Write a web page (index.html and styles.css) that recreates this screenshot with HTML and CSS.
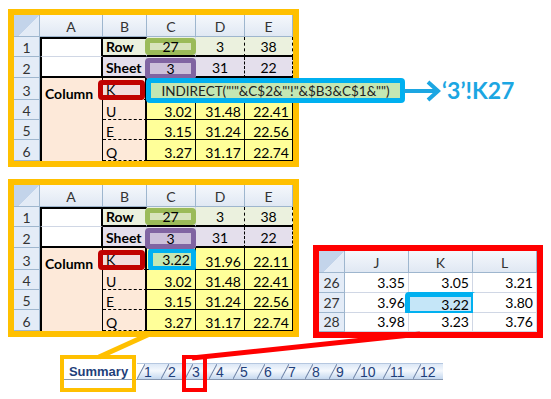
FILE: index.html
```html
<!DOCTYPE html>
<html>
<head>
  <title>INDIRECT lookup across sheets</title>
  <link rel="stylesheet" href="styles.css">
</head>
<body>
<div class="page">

  <!-- summary sheet, formula version -->
  <div class="frame frame-orange">
    <div class="sheet">
      <div class="corner"></div><div class="ch">A</div><div class="ch">B</div><div class="ch">C</div><div class="ch">D</div><div class="ch">E</div>

      <div class="rh">1</div>
      <div class="blank first"></div>
      <div class="lbl green top">Row</div>
      <div class="green sep mid"><span class="mark mark-green">27</span></div>
      <div class="green sep mid dash">3</div>
      <div class="green sep mid dash">38</div>

      <div class="rh">2</div>
      <div class="blank last"></div>
      <div class="lbl purple sep">Sheet</div>
      <div class="purple sep mid"><span class="mark mark-purple">3</span></div>
      <div class="purple sep mid dash">31</div>
      <div class="purple sep mid dash">22</div>

      <div class="rh">3</div>
      <div class="colname">Column</div>
      <div class="key"><span class="mark mark-red">K</span></div>
      <div class="val">
        <div class="callout">
          <div class="formula">INDIRECT("'"&amp;C$2&amp;"'!"&amp;$B3&amp;C$1&amp;"")</div>
          <svg class="arrow" width="38" height="24" viewBox="0 0 38 24">
            <path d="M0 12H33M24 3L34 12L24 21" fill="none" stroke="#1ca6e2" stroke-width="4"/>
          </svg>
          <div class="result">&#8216;3&#8217;!K27</div>
        </div>
      </div>
      <div class="val"></div>
      <div class="val"></div>

      <div class="rh">4</div><div class="key">U</div><div class="val">3.02</div><div class="val">31.48</div><div class="val">22.41</div>
      <div class="rh">5</div><div class="key">E</div><div class="val">3.15</div><div class="val">31.24</div><div class="val">22.56</div>
      <div class="rh">6</div><div class="key">Q</div><div class="val">3.27</div><div class="val">31.17</div><div class="val">22.74</div>
    </div>
  </div>

  <div class="lower">
    <!-- summary sheet, result version -->
    <div class="frame frame-orange">
      <div class="sheet">
        <div class="corner"></div><div class="ch">A</div><div class="ch">B</div><div class="ch">C</div><div class="ch">D</div><div class="ch">E</div>

        <div class="rh">1</div>
        <div class="blank first"></div>
        <div class="lbl green top">Row</div>
        <div class="green sep mid"><span class="mark mark-green">27</span></div>
        <div class="green sep mid dash">3</div>
        <div class="green sep mid dash">38</div>

        <div class="rh">2</div>
        <div class="blank last"></div>
        <div class="lbl purple sep">Sheet</div>
        <div class="purple sep mid"><span class="mark mark-purple">3</span></div>
        <div class="purple sep mid dash">31</div>
        <div class="purple sep mid dash">22</div>

        <div class="rh">3</div>
        <div class="colname">Column</div>
        <div class="key"><span class="mark mark-red">K</span></div>
        <div class="val"><span class="mark mark-blue">3.22</span></div>
        <div class="val">31.96</div>
        <div class="val">22.11</div>

        <div class="rh">4</div><div class="key">U</div><div class="val">3.02</div><div class="val">31.48</div><div class="val">22.41</div>
        <div class="rh">5</div><div class="key">E</div><div class="val">3.15</div><div class="val">31.24</div><div class="val">22.56</div>
        <div class="rh">6</div><div class="key">Q</div><div class="val">3.27</div><div class="val">31.17</div><div class="val">22.74</div>
      </div>
    </div>

    <!-- sheet "3" -->
    <div class="frame frame-red">
      <div class="sheet sheet-3">
        <div class="corner"></div><div class="ch">J</div><div class="ch">K</div><div class="ch">L</div>
        <div class="rh">26</div><div class="num">3.35</div><div class="num">3.05</div><div class="num">3.21</div>
        <div class="rh">27</div><div class="num">3.96</div><div class="num"><span class="mark mark-sky">3.22</span></div><div class="num">3.80</div>
        <div class="rh">28</div><div class="num">3.98</div><div class="num">3.23</div><div class="num">3.76</div>
      </div>
    </div>
  </div>

  <div class="tabs">
    <div class="tab tab-active">Summary</div>
    <div class="tab tab-next">1</div>
    <div class="tab">2</div>
    <div class="tab">3</div>
    <div class="tab">4</div>
    <div class="tab">5</div>
    <div class="tab">6</div>
    <div class="tab">7</div>
    <div class="tab">8</div>
    <div class="tab">9</div>
    <div class="tab tab-wide">10</div>
    <div class="tab tab-wide">11</div>
    <div class="tab tab-wide">12</div>
  </div>

  <!-- connectors between the sheets and their tabs -->
  <svg class="links" width="551" height="399" viewBox="0 0 551 399">
    <line x1="152" y1="333" x2="99" y2="357" stroke="#ffc000" stroke-width="5"/>
    <line x1="420" y1="334" x2="192" y2="358" stroke="#ff0000" stroke-width="5"/>
    <rect x="62" y="357" width="72" height="33" fill="none" stroke="#ffc000" stroke-width="4"/>
    <rect x="184" y="357" width="21" height="33" fill="none" stroke="#ff0000" stroke-width="4"/>
  </svg>
</div>
</body>
</html>
```

FILE: styles.css
```css
body {
  margin: 0;
  background: #fff;
  font-family: Lato, "Liberation Sans", sans-serif;
  font-size: 14px;
  color: #000;
}
.page {
  position: relative;
  width: 551px;
  height: 399px;
  padding: 9px 0 0 8px;
  box-sizing: border-box;
}

.frame {
  border: 6px solid #ffc000;
  width: max-content;
}
.frame-red {
  border-color: #ff0000;
  margin-bottom: -1px;
}

.lower {
  display: flex;
  align-items: flex-end;
  gap: 14px;
  margin-top: 12px;
}

/* excel grid, text sits on the bottom of the cell like in excel */
.sheet {
  display: grid;
  grid-template-columns: 26px 63px 44px 49px 49px 48px;
  grid-template-rows: 22px 20px 21px 22px 20px 20px 21px;
}
.sheet > div {
  position: relative;
  box-sizing: border-box;
  display: flex;
  align-items: flex-end;
  padding: 0 3px;
  border-right: 1px solid #d0d7e5;
  border-bottom: 1px solid #d0d7e5;
  white-space: nowrap;
}
.sheet .corner {
  background: linear-gradient(135deg, #c3d4ea 55%, #e3ebf6 56%);
  border-right: 1px solid #9eb6ce;
  border-bottom: 1px solid #9eb6ce;
}
.sheet .ch, .sheet .rh {
  justify-content: center;
  color: #333;
  background: linear-gradient(#f5f8fc, #e0e8f3);
  border-right: 1px solid #9eb6ce;
  border-bottom: 1px solid #9eb6ce;
}
.sheet .ch { padding-bottom: 1px; }
.sheet .rh {
  background: #e4ecf7;
}

.blank {
  background: #fff;
  border-left: 2px solid #000;
  border-right: 2px solid #000 !important;
}
.blank.first { border-top: 2px solid #000; }
.blank.last { border-bottom: 2px solid #000 !important; }

.lbl { font-weight: bold; }
.top { border-top: 2px solid #000; }
.sep { border-bottom: 2px solid #000 !important; }
.green { background: #ebf1de; border-bottom: 2px solid #000 !important; }
.purple { background: #e4dfec; }
.mid { justify-content: center; }
.dash { border-right: 1px dashed #000 !important; }

.colname {
  grid-row: span 4;
  align-items: flex-start !important;
  padding-top: 7px !important;
  font-weight: bold;
  background: #fde9d9;
  border-left: 2px solid #000;
  border-right: 1px solid #000 !important;
  border-bottom: none !important;
}
.key {
  line-height: 14px;
  background: #fde9d9;
  border-right: 2px solid #000 !important;
  border-bottom: 1px dashed #000 !important;
}
.val {
  line-height: 14px;
  justify-content: flex-end;
  background: #ffff99;
  border-right: 1px solid #000 !important;
  border-bottom: 1px solid #000 !important;
}

/* highlight boxes drawn over cells */
.mark {
  position: absolute;
  display: flex;
  align-items: center;
  box-sizing: border-box;
  border: 5px solid;
  border-radius: 4px;
}
.mark-green {
  inset: 1px -1px 0 -2px;
  justify-content: center;
  border-color: #9bbb59;
  background: #d8e4bc;
}
.mark-purple {
  inset: 1px -1px -3px -2px;
  justify-content: center;
  border-color: #8064a2;
  background: #ccc0da;
  z-index: 1;
}
.mark-red {
  inset: 2px 0 -1px -5px;
  padding-left: 3px;
  border-color: #c00000;
  background: #f2dcdb;
  z-index: 1;
}
.mark-blue {
  inset: 0 -1px -2px 1px;
  justify-content: flex-end;
  padding-right: 1px;
  border-color: #00b0f0;
  background: #c4e7b3;
}
.mark-sky {
  inset: -1px -4px -4px -4px;
  justify-content: flex-end;
  padding-right: 2px;
  border-color: #00b0f0;
  background: #c5e6f8;
}

.callout {
  position: absolute;
  left: -1px;
  top: 0;
  height: 25px;
  display: flex;
  align-items: center;
  z-index: 2;
}
.formula {
  box-sizing: border-box;
  width: 259px;
  height: 25px;
  border: 5px solid #00b0f0;
  border-radius: 4px;
  background: #c4e7b3;
  color: #222;
  display: flex;
  align-items: center;
  justify-content: center;
  font-size: 13.5px;
}
.arrow {
  display: block;
  margin-left: -1px;
}
.result {
  line-height: 25px;
  font-weight: bold;
  font-size: 23px;
  color: #1ca6e2;
}

/* sheet 3 */
.sheet-3 {
  grid-template-columns: 26px 64px 64px 64px;
  grid-template-rows: 22px 20px 20px 19px;
}
.sheet-3 .num {
  justify-content: flex-end;
  padding-bottom: 1px;
  background: #fff;
  border-right: 1px solid #d0d7e5;
  border-bottom: 1px solid #d0d7e5;
}
.sheet-3 .rh { padding-bottom: 1px; }

/* sheet tabs */
.tabs {
  display: flex;
  margin: 26px 0 0 52px;
  height: 17px;
  font-family: "Liberation Sans", Arial, sans-serif;
}
.tab {
  box-sizing: border-box;
  width: 24px;
  height: 17px;
  padding-left: 7px;
  display: flex;
  align-items: center;
  color: #1f3f7a;
  font-size: 14px;
  border-top: 1px solid #b5c7e0;
  border-bottom: 1px solid #8797b0;
  background:
    linear-gradient(to bottom right, transparent calc(50% - 1px), #6f84a8 50%, transparent calc(50% + 1px)) 0 0 / 8px 100% no-repeat,
    linear-gradient(#dce7f6, #f4f8fd 45%, #c5d8ef);
}
.tab-wide { width: 30px; }
.tab-next {
  background:
    linear-gradient(to bottom right, #fff calc(50% - 1px), #6f84a8 50%, transparent calc(50% + 1px)) 0 0 / 8px 100% no-repeat,
    linear-gradient(#dce7f6, #f4f8fd 45%, #c5d8ef);
}
.tab-active {
  width: 77px;
  padding-left: 0;
  justify-content: center;
  font-size: 13px;
  font-weight: bold;
  border-top-color: #fff;
  background: #fff;
}

.links {
  position: absolute;
  left: 0;
  top: 0;
  pointer-events: none;
}
```
